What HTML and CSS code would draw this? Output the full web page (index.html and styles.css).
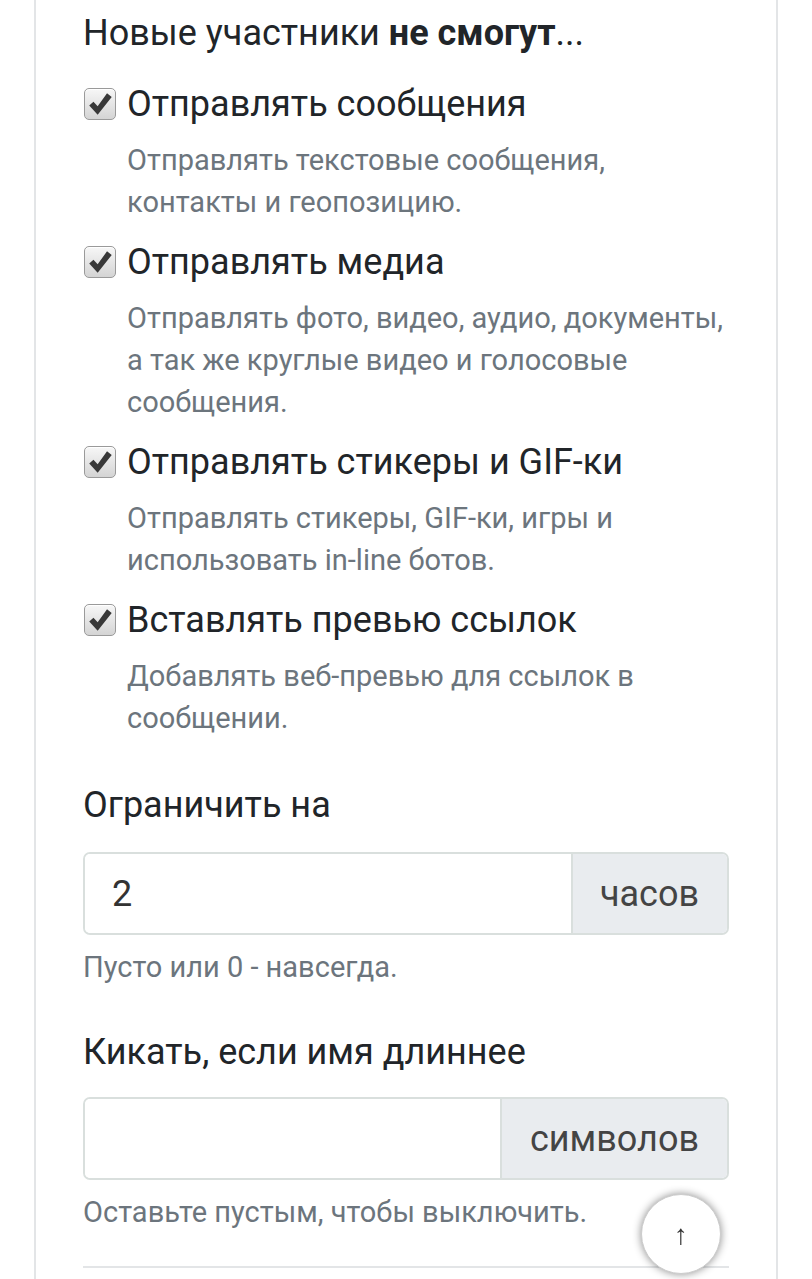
FILE: index.html
```html
<!DOCTYPE html>
<html>
<head>
    <title>Ограничения для новых участников</title>
    <link rel="stylesheet" href="styles.css">
</head>
<body>
    <div class="card">
        <h2 class="title">Новые участники <b>не смогут</b>...</h2>

        <div class="perm">
            <label class="perm-label">
                <span class="box"><svg viewBox="0 0 32 32"><path d="M4.5 17.5l4.5-4 4.5 5L23.5 4.5l5 4-15 19z" /></svg></span>
                Отправлять сообщения
            </label>
            <p class="perm-desc">Отправлять текстовые сообщения, контакты и геопозицию.</p>
        </div>

        <div class="perm">
            <label class="perm-label">
                <span class="box"><svg viewBox="0 0 32 32"><path d="M4.5 17.5l4.5-4 4.5 5L23.5 4.5l5 4-15 19z" /></svg></span>
                Отправлять медиа
            </label>
            <p class="perm-desc">Отправлять фото, видео, аудио, документы, а так же круглые видео и голосовые сообщения.</p>
        </div>

        <div class="perm">
            <label class="perm-label">
                <span class="box"><svg viewBox="0 0 32 32"><path d="M4.5 17.5l4.5-4 4.5 5L23.5 4.5l5 4-15 19z" /></svg></span>
                Отправлять стикеры и GIF-ки
            </label>
            <p class="perm-desc">Отправлять стикеры, GIF-ки, игры и использовать in-line ботов.</p>
        </div>

        <div class="perm">
            <label class="perm-label">
                <span class="box"><svg viewBox="0 0 32 32"><path d="M4.5 17.5l4.5-4 4.5 5L23.5 4.5l5 4-15 19z" /></svg></span>
                Вставлять превью ссылок
            </label>
            <p class="perm-desc">Добавлять веб-превью для ссылок в сообщении.</p>
        </div>

        <div class="field">
            <label class="field-label" for="hours">Ограничить на</label>
            <div class="input-group">
                <input type="text" id="hours" value="2">
                <span class="addon addon-hours">часов</span>
            </div>
            <small class="help">Пусто или 0 - навсегда.</small>
        </div>

        <div class="field">
            <label class="field-label" for="namelen">Кикать, если имя длиннее</label>
            <div class="input-group">
                <input type="text" id="namelen" value="">
                <span class="addon addon-chars">символов</span>
            </div>
            <small class="help">Оставьте пустым, чтобы выключить.</small>
        </div>

        <hr>
    </div>

    <a class="to-top" href="#">↑</a>
</body>
</html>
```

FILE: styles.css
```css
* {
    box-sizing: border-box;
}

html, body {
    margin: 0;
    padding: 0;
    background-color: #fff;
    font-family: Roboto, "Noto Sans", sans-serif;
    color: #212529;
    overflow: hidden;
}

.card {
    margin: 0 34px;
    padding: 9px 47px 40px;
    border-left: 2px solid #e3e5e7;
    border-right: 2px solid #e3e5e7;
    min-height: 1400px;
}

.title {
    margin: 0 0 23px;
    font-size: 36px;
    font-weight: normal;
    line-height: 48px;
}

.title b {
    font-weight: bold;
}

.perm-label {
    display: flex;
    align-items: center;
    gap: 11px;
    height: 48px;
    font-size: 36px;
}

.box {
    width: 32px;
    height: 32px;
    margin-left: 1px;
    border: 1px solid #9a9a9a;
    border-radius: 5px;
    background: linear-gradient(#f7f7f7, #d4d4d4);
    box-shadow: inset 0 1px 0 #fff;
    display: flex;
}

.box svg {
    width: 100%;
    height: 100%;
}

.box path {
    fill: #383838;
}

.perm-desc {
    margin: 11px 0 15px 44px;
    font-size: 29px;
    line-height: 42px;
    color: #6c757d;
}

.field {
    margin-top: 42px;
}

.field + .field {
    margin-top: 43px;
}

.field-label {
    display: block;
    font-size: 36px;
    line-height: 48px;
}

.input-group {
    display: flex;
    height: 83px;
    margin-top: 23px;
    border: 2px solid #d9dfdd;
    border-radius: 7px;
    overflow: hidden;
}

.field + .field .input-group {
    margin-top: 21px;
}

.input-group input {
    flex: 1;
    min-width: 0;
    border: none;
    padding: 0 27px;
    font-family: inherit;
    font-size: 36px;
    color: #333;
    outline: none;
}

.addon {
    display: flex;
    align-items: center;
    justify-content: flex-end;
    padding: 0 28px;
    background-color: #e9ecef;
    border-left: 2px solid #d9dfdd;
    font-size: 36px;
    color: #444;
}

.addon-hours {
    width: 156px;
}

.addon-chars {
    width: 227px;
}

.help {
    display: block;
    margin-top: 14px;
    font-size: 29px;
    line-height: 36px;
    color: #6c757d;
}

hr {
    margin: 36px 0 0;
    border: none;
    border-top: 2px solid #e3e5e7;
}

.to-top {
    position: fixed;
    left: 641px;
    top: 1194px;
    width: 80px;
    height: 80px;
    border-radius: 50%;
    background-color: #fff;
    border: 1px solid #ccc;
    box-shadow: 0 0 8px rgba(0, 0, 0, 0.45);
    display: flex;
    align-items: center;
    justify-content: center;
    color: #333;
    font-size: 28px;
    text-decoration: none;
}
```
